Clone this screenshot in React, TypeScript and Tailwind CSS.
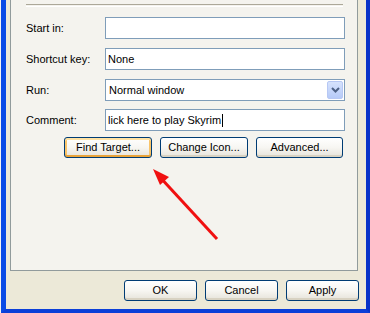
import React from "react";

const font = { fontFamily: '"Liberation Sans", Arial, sans-serif' };

function Field({
  label,
  value,
  top,
  caret,
}: {
  label: string;
  value?: string;
  top: string;
  caret?: boolean;
}) {
  return (
    <div className={`flex items-center ${top}`}>
      <div className="w-[79px] text-[11px] text-black">{label}</div>
      <div className="flex h-[22px] w-[240px] items-center border border-[#7F9DB9] bg-white px-[2px] text-[11px] text-black">
        {value}
        {caret && <span className="ml-[1px] inline-block h-[13px] w-[1px] bg-black" />}
      </div>
    </div>
  );
}

function XpButton({
  label,
  w,
  focused,
}: {
  label: string;
  w: string;
  focused?: boolean;
}) {
  return (
    <button
      className={`flex h-[21px] ${w} items-center justify-center rounded-[3px] border border-[#003C74] bg-linear-to-b from-white via-[#F7F6F2] to-[#E6E3DA] text-[11px] text-black ${
        focused
          ? "shadow-[inset_0_2px_0_#FFE2A3,inset_0_-2px_0_#E8A33A,inset_2px_0_0_#F9C46A,inset_-2px_0_0_#F9C46A]"
          : "shadow-[inset_0_-2px_0_#D8D2C2]"
      }`}
    >
      {label}
    </button>
  );
}

export default function App() {
  return (
    <div className="relative flex h-[313px] w-[370px] overflow-hidden bg-white" style={font}>
      <div className="w-[1px] bg-[#F3F3F3]" />
      <div className="flex flex-1 flex-col border-b-[4px] border-l-[5px] border-r-[4px] border-b-[#0B3FD8] border-l-[#0A4CE6] border-r-[#0833C8] bg-[#ECE9D8]">
        <div className="ml-[4px] mr-[8px] h-[271px] border-x border-b border-[#919B9C] bg-[#F4F3EE]">
          <div className="ml-[15px] mt-[4px] h-[2px] w-[317px] border-t border-[#ACA899] bg-transparent shadow-[0_1px_0_white]" />
          <div className="pl-[15px]">
            <Field label="Start in:" top="mt-[11px]" />
            <Field label="Shortcut key:" value="None" top="mt-[9px]" />
            <div className="mt-[9px] flex items-center">
              <div className="w-[79px] text-[11px] text-black">Run:</div>
              <div className="flex h-[22px] w-[240px] items-center justify-between border border-[#7F9DB9] bg-white pl-[3px] pr-[1px] text-[11px] text-black">
                <span>Normal window</span>
                <div className="flex h-[18px] w-[16px] items-center justify-center rounded-[2px] border border-[#B7C8F4] bg-linear-to-b from-[#D6E2FC] to-[#B6CAF8]">
                  <svg width="9" height="6" viewBox="0 0 9 6">
                    <path d="M1 1 L4.5 4.5 L8 1" fill="none" stroke="#4D6185" strokeWidth="2" />
                  </svg>
                </div>
              </div>
            </div>
            <Field label="Comment:" value="lick here to play Skyrim" top="mt-[8px]" caret />
          </div>
          <div className="ml-[53px] mt-[6px] flex gap-[8px]">
            <XpButton label="Find Target..." w="w-[88px]" focused />
            <XpButton label="Change Icon..." w="w-[88px]" />
            <XpButton label="Advanced..." w="w-[87px]" />
          </div>
        </div>
        <div className="ml-[118px] mt-[9px] flex gap-[8px]">
          <XpButton label="OK" w="w-[73px]" />
          <XpButton label="Cancel" w="w-[73px]" />
          <XpButton label="Apply" w="w-[73px]" />
        </div>
      </div>
      <svg
        className="pointer-events-none absolute left-0 top-0"
        width="370"
        height="313"
        viewBox="0 0 370 313"
      >
        <line x1="158" y1="175" x2="217" y2="239" stroke="#F01010" strokeWidth="3" />
        <polygon points="153,169 169,177 160,185" fill="#F01010" />
      </svg>
    </div>
  );
}
